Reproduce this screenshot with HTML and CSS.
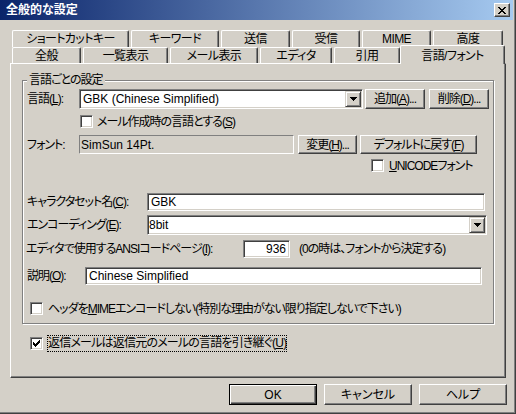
FILE: index.html
```html
<!DOCTYPE html>
<html lang="ja">
<head>
<meta charset="utf-8">
<title>全般的な設定</title>
<link rel="stylesheet" href="styles.css">
</head>
<body>
<div class="window">
  <div class="titlebar">
    <span class="title">全般的な設定</span>
    <span class="close"><svg width="8" height="7" viewBox="0 0 8 7"><path d="M0 0h2v1H0zM6 0h2v1H6zM1 1h2v1H1zM5 1h2v1H5zM2 2h4v1H2zM3 3h2v1H3zM2 4h4v1H2zM1 5h2v1H1zM5 5h2v1H5zM0 6h2v1H0zM6 6h2v1H6z"/></svg></span>
  </div>
  <div class="client">
    <div class="tabs">
      <div class="tabrow back">
        <div class="tab t-shortcut">ショートカットキー</div>
        <div class="tab t-keyword">キーワード</div>
        <div class="tab t-send">送信</div>
        <div class="tab t-recv">受信</div>
        <div class="tab t-mime">MIME</div>
        <div class="tab t-adv">高度</div>
      </div>
      <div class="tabrow front">
        <div class="tab t-general">全般</div>
        <div class="tab t-list">一覧表示</div>
        <div class="tab t-view">メール表示</div>
        <div class="tab t-editor">エディタ</div>
        <div class="tab t-quote">引用</div>
        <div class="tab t-lang sel">言語/フォント</div>
      </div>
    </div>
    <div class="panel">
      <div class="group">
        <div class="gtitle">言語ごとの設定</div>
        <div class="row r-lang">
          <span class="lbl l-short">言語(<u>L</u>):</span>
          <div class="combo c-lang"><span class="val">GBK (Chinese Simplified)</span><span class="drop"><svg width="7" height="4" viewBox="0 0 7 4"><path d="M0 0h7v1h-1v1h-1v1h-1v1h-1v-1h-1v-1h-1v-1h-1z"/></svg></span></div>
          <button class="btn b-add">追加(<u>A</u>)...</button>
          <button class="btn b-del">削除(<u>D</u>)...</button>
        </div>
        <div class="row r-compose">
          <span class="check"></span><span class="ctext">メール作成時の言語とする(<u>S</u>)</span>
        </div>
        <div class="row r-font">
          <span class="lbl l-short">フォント:</span>
          <div class="static f-font">SimSun 14Pt.</div>
          <button class="btn b-change">変更(<u>H</u>)...</button>
          <button class="btn b-default">デフォルトに戻す(<u>F</u>)</button>
        </div>
        <div class="row r-unicode">
          <span class="check"></span><span class="ctext"><u>U</u>NICODEフォント</span>
        </div>
        <div class="row r-charset">
          <span class="lbl l-long">キャラクタセット名(<u>C</u>):</span>
          <div class="field f-charset">GBK</div>
        </div>
        <div class="row r-enc">
          <span class="lbl l-long">エンコーディング(<u>E</u>):</span>
          <div class="combo c-enc"><span class="val">8bit</span><span class="drop"><svg width="7" height="4" viewBox="0 0 7 4"><path d="M0 0h7v1h-1v1h-1v1h-1v1h-1v-1h-1v-1h-1v-1h-1z"/></svg></span></div>
        </div>
        <div class="row r-ansi">
          <span class="lbl l-ansi">エディタで使用するANSIコードページ(<u>I</u>):</span>
          <div class="field f-ansi">936</div>
          <span class="note">(0の時は、フォントから決定する)</span>
        </div>
        <div class="row r-desc">
          <span class="lbl l-desc">説明(<u>O</u>):</span>
          <div class="field f-desc">Chinese Simplified</div>
        </div>
        <div class="row r-header">
          <span class="check"></span><span class="ctext">ヘッダを<u>M</u>IMEエンコードしない(特別な理由がない限り指定しないで下さい)</span>
        </div>
      </div>
      <div class="row r-reply">
        <span class="check"><svg width="7" height="7" viewBox="0 0 7 7"><path d="M0 2h1v3H0zM1 3h1v3H1zM2 4h1v3H2zM3 3h1v3H3zM4 2h1v3H4zM5 1h1v3H5zM6 0h1v3H6z"/></svg></span><span class="ctext focus">返信メールは返信元のメールの言語を引き継ぐ(<u>U</u>)</span>
      </div>
    </div>
    <div class="buttons">
      <button class="btn dlg default">OK</button>
      <button class="btn dlg">キャンセル</button>
      <button class="btn dlg">ヘルプ</button>
    </div>
  </div>
</div>
</body>
</html>
```

FILE: styles.css
```css
* { box-sizing: border-box; }
html, body { margin: 0; padding: 0; }
body {
  width: 516px;
  height: 414px;
  overflow: hidden;
  background: #D4D0C8;
  color: #000;
  font-family: "Liberation Sans", "Noto Sans CJK JP", sans-serif;
  font-size: 12px;
  line-height: 14px;
  letter-spacing: -1px;
  font-feature-settings: "palt";
}
u { text-decoration: underline; text-underline-offset: 1px; }

.window {
  width: 516px;
  height: 414px;
  display: flex;
  flex-direction: column;
  border-right: 1px solid #404040;
  border-bottom: 1px solid #404040;
  padding: 0 1px 1px 0;
  box-shadow: inset -1px -1px #808080;
}

.titlebar {
  height: 20px;
  margin-right: 1px;
  flex: none;
  display: flex;
  align-items: center;
  justify-content: space-between;
  padding: 0 3px 0 6px;
  background: linear-gradient(to right, #0A246A, #A6CAF0);
  color: #fff;
  font-weight: bold;
  letter-spacing: 0;
}
.close {
  width: 16px;
  height: 14px;
  display: flex;
  align-items: center;
  justify-content: center;
  background: #D4D0C8;
  border: 1px solid;
  border-color: #fff #404040 #404040 #fff;
  box-shadow: inset -1px -1px #808080;
}
.close svg { display: block; fill: #000; }

.client {
  flex: 1;
  display: flex;
  flex-direction: column;
  padding-left: 10px;
}

.tabs { margin-top: 10px; }
.tabrow { display: flex; gap: 2px; padding-left: 2px; }
.tabrow.back { height: 17px; }
.tabrow.front { height: 16px; }
.tab {
  flex: none;
  text-align: center;
  background: #D4D0C8;
  border-top: 1px solid #fff;
  border-left: 1px solid #fff;
  border-right: 1px solid #404040;
  box-shadow: inset -1px 0 #808080;
  border-radius: 2px 2px 0 0;
  letter-spacing: -0.6px;
}
.back .tab { height: 17px; padding-top: 1px; }
.front .tab { height: 16px; padding-top: 1px; }
.front .tab.sel {
  position: relative;
  z-index: 1;
  height: 19px;
  margin: -2px -2px 0 -2px;
  padding-top: 3px;
}
.t-shortcut { width: 117px; }
.t-keyword { width: 88px; }
.t-send { width: 69px; }
.t-recv { width: 68px; }
.t-mime { width: 69px; }
.t-adv { width: 70px; }
.t-general { width: 69px; }
.t-list { width: 85px; }
.t-view { width: 88px; }
.t-editor { width: 72px; }
.t-quote { width: 66px; }
.t-lang { width: 105px; }

.panel {
  width: 496px;
  height: 315px;
  flex: none;
  border-top: 1px solid #fff;
  border-left: 1px solid #fff;
  border-right: 1px solid #404040;
  border-bottom: 1px solid #404040;
  box-shadow: inset -1px -1px #808080;
  padding: 16px 0 0 11px;
}

.group {
  width: 472px;
  height: 244px;
  border: 1px solid #808080;
  box-shadow: inset 1px 1px #fff, 1px 1px #fff;
}
.gtitle {
  width: max-content;
  margin: -8px 0 0 4px;
  padding: 0 2px;
  background: #D4D0C8;
  line-height: 14px;
}

.row { display: flex; align-items: center; }
.lbl { flex: none; white-space: nowrap; }
.l-short { width: 52px; }
.l-long { width: 120px; }
.l-ansi { width: 217px; }
.l-desc { width: 58px; }

.r-lang { margin-top: 2px; height: 20px; padding-left: 4px; }
.r-compose { margin-top: 6px; height: 13px; padding-left: 57px; }
.r-font { margin-top: 7px; height: 19px; padding-left: 4px; }
.r-unicode { margin-top: 5px; height: 13px; padding-left: 348px; }
.r-charset { margin-top: 21px; height: 18px; padding-left: 4px; }
.r-enc { margin-top: 4px; height: 20px; padding-left: 4px; }
.r-ansi { margin-top: 5px; height: 18px; padding-left: 3px; }
.r-desc { margin-top: 9px; height: 18px; padding-left: 4px; }
.r-header { margin-top: 17px; height: 13px; padding-left: 7px; }
.r-reply { margin-top: 13px; height: 13px; padding-left: 8px; }

.field, .combo, .check {
  border: 1px solid;
  border-color: #808080 #fff #fff #808080;
  box-shadow: inset 1px 1px #404040, inset -1px -1px #D4D0C8;
  background: #fff;
}
.field {
  height: 100%;
  display: flex;
  align-items: center;
  padding: 0 3px 0 3px;
  white-space: nowrap;
  letter-spacing: 0;
}
.f-charset { width: 338px; }
.f-ansi { width: 47px; justify-content: flex-end; }
.f-desc { width: 397px; }

.combo {
  height: 100%;
  display: flex;
  align-items: stretch;
  padding: 1px;
  letter-spacing: 0;
}
.combo .val {
  flex: 1;
  display: flex;
  align-items: center;
  padding-left: 2px;
  white-space: nowrap;
}
.combo .drop {
  width: 16px;
  flex: none;
  display: flex;
  align-items: center;
  justify-content: center;
  background: #D4D0C8;
  border: 1px solid;
  border-color: #D4D0C8 #404040 #404040 #D4D0C8;
  box-shadow: inset 1px 1px #fff, inset -1px -1px #808080;
}
.drop svg { display: block; fill: #000; }
.c-lang { width: 284px; }
.c-enc { width: 340px; }
.c-enc .val { padding-left: 0; }

.static {
  height: 100%;
  display: flex;
  align-items: center;
  border: 1px solid;
  border-color: #808080 #fff #fff #808080;
  padding-left: 1px;
  letter-spacing: 0;
}
.f-font { width: 215px; }

.check {
  width: 13px;
  height: 13px;
  flex: none;
  display: flex;
  align-items: center;
  justify-content: center;
}
.check svg { display: block; fill: #000; }
.ctext { margin-left: 5px; white-space: nowrap; }
.r-compose .ctext { margin-left: 4px; }
.ctext.focus {
  margin-left: 4px;
  border: 1px dotted #000;
  line-height: 15px;
  letter-spacing: -0.8px;
}

.note { margin-left: 9px; white-space: nowrap; }

.btn {
  font: inherit;
  letter-spacing: inherit;
  color: #000;
  background: #D4D0C8;
  border: 1px solid;
  border-color: #fff #404040 #404040 #fff;
  box-shadow: inset -1px -1px #808080;
  padding: 0;
  height: 100%;
  display: flex;
  align-items: center;
  justify-content: center;
  white-space: nowrap;
  flex: none;
}
.b-add { width: 60px; margin-left: 2px; }
.b-del { width: 60px; margin-left: 4px; }
.b-change { width: 59px; margin-left: 4px; }
.b-default { width: 117px; margin-left: 3px; }

.buttons {
  margin-top: 6px;
  height: 21px;
  display: flex;
  justify-content: flex-end;
  gap: 7px;
  padding-right: 7px;
}
.btn.dlg { width: 88px; height: 21px; letter-spacing: 0; }
.btn.default {
  border-color: #000;
  box-shadow: inset 1px 1px #fff, inset -1px -1px #404040, inset -2px -2px #808080;
}
```
